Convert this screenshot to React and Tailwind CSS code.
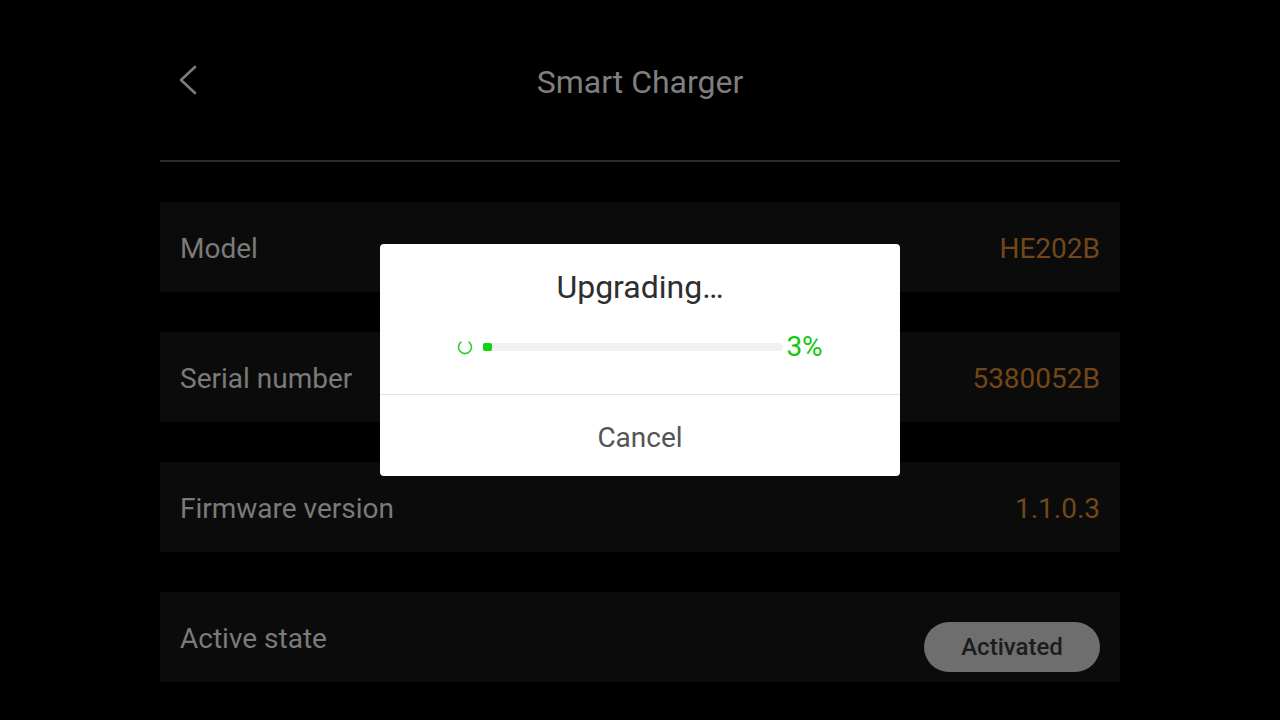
const rows = [
  { label: "Model", value: "HE202B" },
  { label: "Serial number", value: "5380052B" },
  { label: "Firmware version", value: "1.1.0.3" },
];

export default function App() {
  return (
    <div
      className="relative w-[1280px] h-[720px] overflow-hidden bg-black"
      style={{ fontFamily: "Roboto, 'Liberation Sans', sans-serif" }}
    >
      <div className="w-[960px] mx-auto">
        <header className="relative h-[162px] flex items-center justify-center border-b-2 border-[#2c2c2c]">
          <button className="absolute left-[18px] top-[65px]">
            <svg width="20" height="30" viewBox="0 0 20 30">
              <path
                d="M17 2 L3 15 L17 28"
                fill="none"
                stroke="#7c7c7c"
                strokeWidth="2.6"
                strokeLinecap="round"
                strokeLinejoin="round"
              />
            </svg>
          </button>
          <h1 className="text-[32px] text-[#7f7f7f] mt-[4px]">Smart Charger</h1>
        </header>

        <div className="mt-[40px] flex flex-col gap-[40px]">
          {rows.map((row) => (
            <div
              key={row.label}
              className="h-[90px] rounded-[3px] bg-[#0b0b0b] px-[20px] pt-[4px] flex items-center justify-between"
            >
              <span className="text-[28px] text-[#7a7a7a]">{row.label}</span>
              <span className="text-[28px] text-[#72471a]">{row.value}</span>
            </div>
          ))}
          <div className="h-[90px] rounded-[3px] bg-[#0b0b0b] px-[20px] flex items-center justify-between">
            <span className="text-[28px] text-[#7a7a7a] mt-[4px]">Active state</span>
            <span className="mt-[20px] h-[50px] w-[176px] rounded-full bg-[#6e6e6e] flex items-center justify-center text-[24px] font-medium text-[#1c1c1c]">
              Activated
            </span>
          </div>
        </div>
      </div>

      <div className="absolute inset-0 flex items-center justify-center">
        <div className="w-[520px] h-[232px] bg-white rounded-[4px] flex flex-col">
          <div className="h-[151px] border-b border-[#e2e2e2] flex flex-col items-center pt-[23px]">
            <h2 className="text-[32px] leading-[40px] text-[#2e2e2e]">Upgrading…</h2>
            <div className="mt-[25px] h-[30px] flex items-center">
              <svg width="16" height="16" viewBox="0 0 16 16" className="mr-[10px]">
                <path
                  d="M4.5 2.6 A6.5 6.5 0 1 0 11.5 2.6"
                  fill="none"
                  stroke="#2ecc2e"
                  strokeWidth="1.6"
                />
              </svg>
              <div className="w-[300px] h-[8px] bg-[#f1f1f1] rounded-r-[4px] flex">
                <div className="w-[9px] h-full bg-[#0ed40e] rounded-[2px]" />
              </div>
              <span className="ml-[3px] text-[28px] text-[#12c812]">3%</span>
            </div>
          </div>
          <div className="flex-1 flex items-center justify-center pt-[4px]">
            <span className="text-[28px] text-[#555555]">Cancel</span>
          </div>
        </div>
      </div>
    </div>
  );
}
